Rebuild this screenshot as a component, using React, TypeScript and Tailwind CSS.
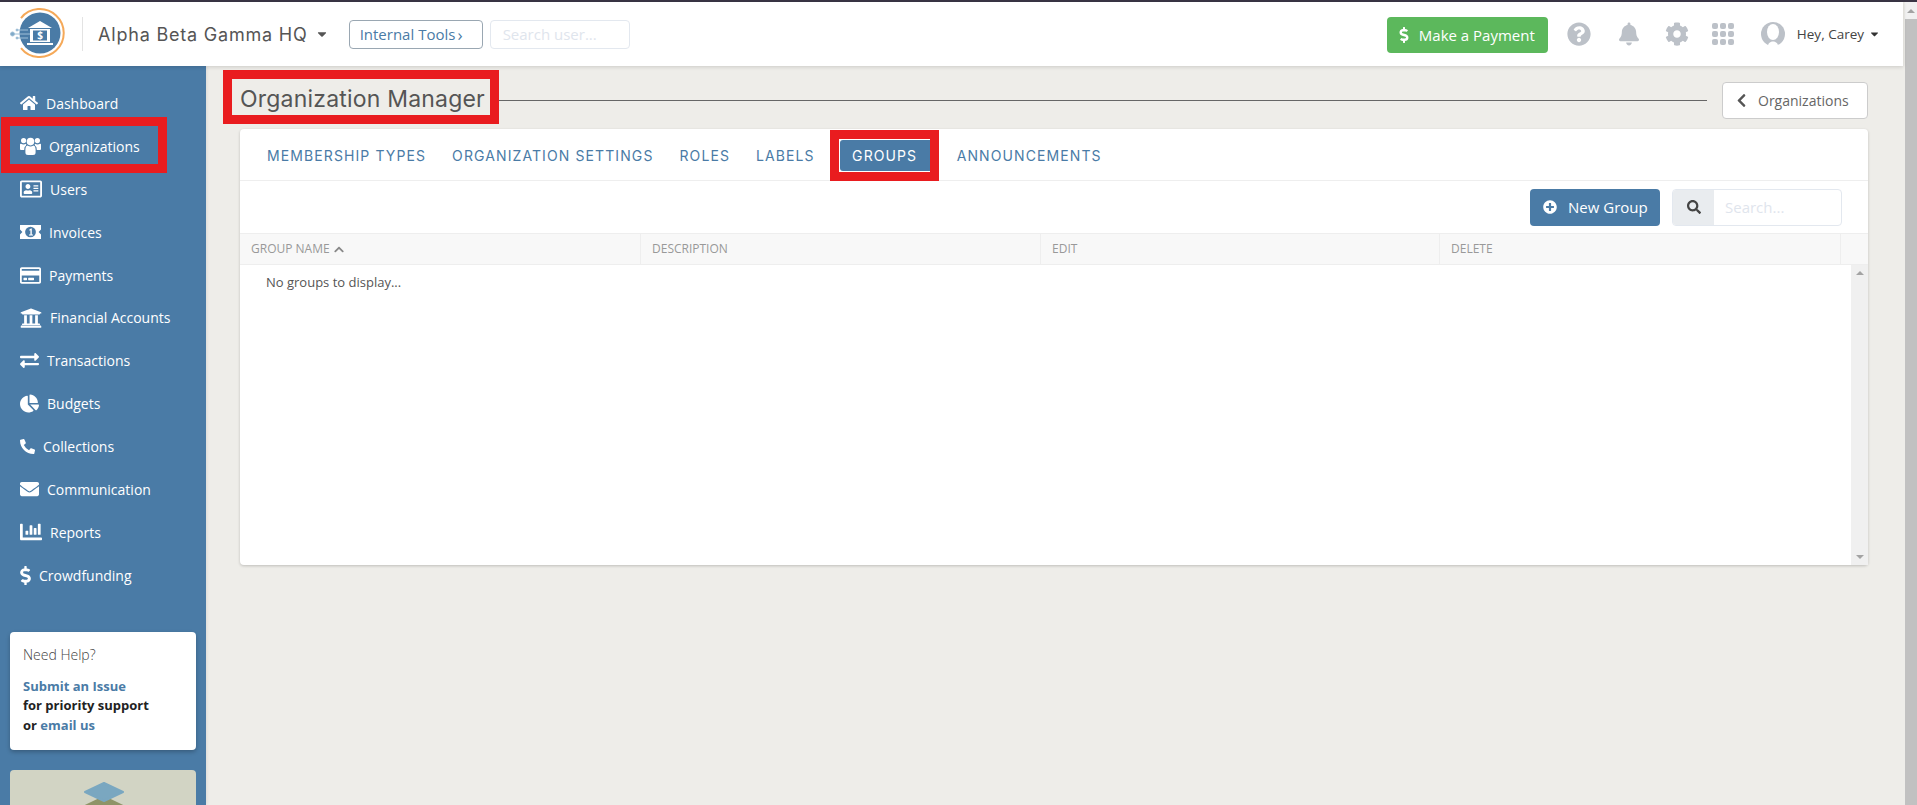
import {
  FaHome,
  FaRegAddressCard,
  FaRegCreditCard,
  FaUniversity,
  FaExchangeAlt,
  FaChartPie,
  FaPhoneAlt,
  FaEnvelope,
  FaChartBar,
  FaDollarSign,
  FaQuestionCircle,
  FaBell,
  FaCog,
  FaChevronLeft,
  FaChevronUp,
  FaPlusCircle,
  FaSearch,
  FaCaretDown,
} from 'react-icons/fa';

function UsersIcon({ className }: { className?: string }) {
  return (
    <svg viewBox="0 0 21 18" className={className} fill="currentColor">
      <circle cx="3.6" cy="3.6" r="2.6" />
      <circle cx="17.4" cy="3.6" r="2.6" />
      <path d="M0 7.5 Q0 6.6 1 6.8 Q3.6 8 6 6.8 Q6.6 7.6 6 8.4 Q4 9.6 4.2 13 H1 Q0 13 0 12 Z" />
      <path d="M21 7.5 Q21 6.6 20 6.8 Q17.4 8 15 6.8 Q14.4 7.6 15 8.4 Q17 9.6 16.8 13 H20 Q21 13 21 12 Z" />
      <circle cx="10.5" cy="4.6" r="3.8" />
      <path d="M5.4 15.5 V12 Q5.4 9 7.6 8.6 Q10.5 10.4 13.4 8.6 Q15.6 9 15.6 12 V15.5 Q15.6 18 13 18 H8 Q5.4 18 5.4 15.5 Z" />
    </svg>
  );
}

function BillIcon({ className }: { className?: string }) {
  return (
    <svg viewBox="0 0 21 14" className={className}>
      <rect width="21" height="14" fill="#fff" />
      <ellipse cx="10.5" cy="7" rx="5.4" ry="5.2" fill="#4a7ba6" />
      <path d="M9.2 4.8 L11 3.6 H11.8 V9.4 H13 V10.4 H9 V9.4 H10.4 V5.2 L9.6 5.8 Z" fill="#fff" />
      <path d="M0 4.6 L2.4 7 L0 9.4 Z M21 4.6 L18.6 7 L21 9.4 Z" fill="#4a7ba6" />
    </svg>
  );
}

const navItems = [
  { label: 'Dashboard', Icon: FaHome, size: 'w-[18px] h-[16px]' },
  { label: 'Organizations', Icon: UsersIcon, size: 'w-[21px] h-[18px]', marked: true },
  { label: 'Users', Icon: FaRegAddressCard, size: 'w-[22px] h-[20px]' },
  { label: 'Invoices', Icon: BillIcon, size: 'w-[21px] h-[14px]' },
  { label: 'Payments', Icon: FaRegCreditCard, size: 'w-[21px] h-[21px]' },
  { label: 'Financial Accounts', Icon: FaUniversity, size: 'w-[22px] h-[22px]' },
  { label: 'Transactions', Icon: FaExchangeAlt, size: 'w-[19px] h-[19px]' },
  { label: 'Budgets', Icon: FaChartPie, size: 'w-[19px] h-[19px]' },
  { label: 'Collections', Icon: FaPhoneAlt, size: 'w-[15px] h-[15px]' },
  { label: 'Communication', Icon: FaEnvelope, size: 'w-[19px] h-[20px]' },
  { label: 'Reports', Icon: FaChartBar, size: 'w-[22px] h-[22px]' },
  { label: 'Crowdfunding', Icon: FaDollarSign, size: 'w-[11px] h-[19px]' },
];

const tabs = ['Membership Types', 'Organization Settings', 'Roles', 'Labels', 'Groups', 'Announcements'];

const columns = [
  { label: 'Group Name', width: 'w-[401px]', sorted: true },
  { label: 'Description', width: 'w-[400px]' },
  { label: 'Edit', width: 'w-[399px]' },
  { label: 'Delete', width: 'w-[401px]' },
];

function Logo() {
  return (
    <svg width="58" height="60" viewBox="0 0 58 60" className="-mt-[4px] shrink-0">
      <circle cx="32" cy="31" r="20.5" fill="#4a7ba6" />
      <path d="M13 16 A24 24 0 1 1 13 46" fill="none" stroke="#f5a959" strokeWidth="2" />
      <g stroke="#9fc0d8" strokeWidth="1" fill="#7fa9c8">
        <path d="M6 32 H22 M9 28 H20 M9 36 H20" />
        <circle cx="4.5" cy="32" r="2" />
        <circle cx="9" cy="28" r="1" />
        <circle cx="9" cy="36" r="1" />
      </g>
      <path d="M32 19 L44 26 H20 Z" fill="#fff" />
      <rect x="22" y="27" width="20" height="13" fill="#fff" />
      <rect x="25" y="28.5" width="14" height="10" fill="#4a7ba6" />
      <rect x="19" y="41" width="26" height="2" fill="#fff" />
      <text x="32" y="37" textAnchor="middle" fontSize="10" fontWeight="700" fill="#fff" fontFamily="'Open Sans', sans-serif">
        $
      </text>
    </svg>
  );
}

function Header() {
  return (
    <header className="relative z-10 flex h-[64px] w-full items-center bg-white pl-[8px] pr-[24px] shadow-[0_1px_4px_rgba(0,0,0,0.15)]">
      <Logo />
      <div className="ml-[16px] h-[34px] w-px bg-[#e3e3e3]" />
      <span className="ml-[15px] font-['Inter',sans-serif] text-[18px] tracking-[0.8px] text-[#555]">Alpha Beta Gamma HQ</span>
      <FaCaretDown className="ml-[8px] h-[14px] w-[12px] text-[#555]" />
      <button className="ml-[21px] flex h-[29px] w-[134px] items-center rounded-[4px] border border-[#9aa7b2] pl-[10px] text-[15px] text-[#4a7ba6]">
        Internal Tools<span className="ml-[2px] text-[17px] leading-none">›</span>
      </button>
      <div className="ml-[7px] flex h-[29px] w-[140px] items-center rounded-[4px] border border-[#e3e8ef] pl-[12px] text-[15px] text-[#dfe5ed]">
        Search user...
      </div>
      <div className="flex-1" />
      <button className="mt-[2px] flex h-[36px] w-[161px] items-center rounded-[4px] bg-[#5cb85c] pl-[12px] text-[15px] text-white">
        <FaDollarSign className="h-[16px] w-[10px]" />
        <span className="ml-[10px]">Make a Payment</span>
      </button>
      <FaQuestionCircle className="ml-[19px] h-[24px] w-[24px] text-[#bcc1c8]" />
      <FaBell className="ml-[28px] h-[24px] w-[20px] text-[#bcc1c8]" />
      <FaCog className="ml-[26px] h-[24px] w-[24px] text-[#bcc1c8]" />
      <svg width="22" height="22" viewBox="0 0 22 22" className="ml-[23px] text-[#bcc1c8]" fill="currentColor">
        <rect x="0" y="0" width="6" height="6" rx="2" />
        <rect x="8" y="0" width="6" height="6" rx="2" />
        <rect x="16" y="0" width="6" height="6" rx="2" />
        <rect x="0" y="8" width="6" height="6" rx="2" />
        <rect x="8" y="8" width="6" height="6" rx="2" />
        <rect x="16" y="8" width="6" height="6" rx="2" />
        <rect x="0" y="16" width="6" height="6" rx="2" />
        <rect x="8" y="16" width="6" height="6" rx="2" />
        <rect x="16" y="16" width="6" height="6" rx="2" />
      </svg>
      <svg width="24" height="26" viewBox="0 0 24 26" className="ml-[27px]">
        <circle cx="12" cy="13" r="12" fill="#bcc1c8" />
        <ellipse cx="12" cy="11" rx="6" ry="8" fill="#fff" />
        <path d="M7 25 C7 19 17 19 17 25 Z" fill="#fff" />
      </svg>
      <span className="ml-[12px] text-[13.5px] text-[#444]">Hey, Carey</span>
      <FaCaretDown className="ml-[6px] h-[12px] w-[9px] text-[#333]" />
    </header>
  );
}

function Sidebar() {
  return (
    <aside className="flex w-[206px] shrink-0 flex-col overflow-hidden bg-[#4a7ba6] pt-[16px] shadow-[1px_0_3px_rgba(0,0,0,0.08)]">
      <nav>
        {navItems.map(({ label, Icon, size, marked }) => (
          <a key={label} className="relative flex h-[42.9px] items-center pl-[20px] text-[14px] text-white">
            <Icon className={size} />
            <span className="ml-[8px]">{label}</span>
            {marked && (
              <span className="absolute -top-[8px] left-[1px] h-[56px] w-[166px] border-[9px] border-[#e91c1f]" />
            )}
          </a>
        ))}
      </nav>
      <div className="mx-[10px] mt-[35px] h-[118px] shrink-0 rounded-[4px] bg-white px-[13px] pt-[12px] shadow-[0_2px_4px_rgba(0,0,0,0.25)]">
        <p className="text-[14px] font-light text-[#444]">Need Help?</p>
        <p className="mt-[12px] text-[13px] font-bold leading-[19.5px] text-[#222]">
          <span className="text-[#4a7ba6]">Submit an Issue</span>
          <br />
          for priority support
          <br />
          or <span className="text-[#4a7ba6]">email us</span>
        </p>
      </div>
      <div className="mx-[10px] mt-[20px] flex h-[60px] shrink-0 justify-center rounded-t-[4px] bg-[#d2d4c4] pt-[12px]">
        <svg width="44" height="34" viewBox="0 0 44 34" className="ml-[2px]">
          <path d="M22 15 L41 24 L22 33 L3 24 Z" fill="#8f9468" stroke="#8f9468" strokeWidth="2" strokeLinejoin="round" />
          <path d="M22 1 L41 10 L22 19 L3 10 Z" fill="#7aa7c0" stroke="#7aa7c0" strokeWidth="2" strokeLinejoin="round" />
        </svg>
      </div>
    </aside>
  );
}

function Table() {
  return (
    <div>
      <div className="flex h-[32px] border-y border-[#eee] bg-[#f8f8f8] text-[12px] uppercase text-[#999]">
        {columns.map((col) => (
          <div key={col.label} className={`${col.width} flex items-center gap-[3px] border-r border-[#eee] pl-[11px]`}>
            {col.label}
            {col.sorted && <FaChevronUp className="h-[11px] w-[12px] text-[#888]" />}
          </div>
        ))}
      </div>
      <div className="flex h-[300px]">
        <div className="flex-1 pl-[26px] pt-[8px] text-[13px] text-[#555]">No groups to display...</div>
        <div className="flex w-[17px] flex-col items-center justify-between bg-[#f0f0f0] py-[6px]">
          <span className="h-0 w-0 border-x-[4px] border-b-[4px] border-x-transparent border-b-[#a3a3a3]" />
          <span className="h-0 w-0 border-x-[4px] border-t-[4px] border-x-transparent border-t-[#a3a3a3]" />
        </div>
      </div>
    </div>
  );
}

function GroupsCard() {
  return (
    <section className="mt-[5px] w-[1628px] rounded-[4px] bg-white shadow-[0_1px_3px_rgba(0,0,0,0.2)]">
      <div className="flex h-[52px] items-center gap-[26px] border-b border-[#eee] pl-[27px] pt-[2px] font-['Inter',sans-serif] text-[14px] uppercase tracking-[1.1px] text-[#4a7ba6]">
        {tabs.map((tab) =>
          tab === 'Groups' ? (
            <div key={tab} className="-ml-[11px] -mr-[8px] h-[51px] w-[109px] border-[9px] border-[#e91c1f] bg-white py-[1px] pl-[1px]">
              <div className="flex h-full items-center justify-center rounded-l-[3px] bg-[#4a7ba6] text-white">{tab}</div>
            </div>
          ) : (
            <span key={tab}>{tab}</span>
          ),
        )}
      </div>
      <div className="flex h-[52px] items-center justify-end pr-[26px]">
        <button className="flex h-[37px] w-[130px] items-center rounded-[4px] bg-[#4a7ba6] pl-[13px] text-[15px] text-white">
          <FaPlusCircle className="h-[14px] w-[14px]" />
          <span className="ml-[11px]">New Group</span>
        </button>
        <div className="ml-[12px] flex h-[37px] w-[170px] overflow-hidden rounded-[4px] border border-[#e3e8ef]">
          <div className="flex w-[41px] items-center justify-center bg-[#e9ecef]">
            <FaSearch className="h-[14px] w-[14px] text-[#444]" />
          </div>
          <div className="flex flex-1 items-center pl-[11px] text-[15px] text-[#dfe5ed]">Search...</div>
        </div>
      </div>
      <Table />
    </section>
  );
}

export default function App() {
  return (
    <div className="flex h-[805px] w-[1917px] overflow-hidden bg-[#eeede9] font-['Open_Sans',sans-serif]">
      <div className="flex min-w-0 flex-1 flex-col">
        <div className="h-[2px] w-[1917px] shrink-0 bg-[#3a3545]" />
        <div className="w-[1903px]">
          <Header />
        </div>
        <div className="flex min-h-0 flex-1">
          <Sidebar />
          <main className="flex-1 pl-[34px]">
            <div className="flex items-center">
              <h1 className="-ml-[17px] mt-[4px] flex h-[54px] w-[276px] shrink-0 items-center border-[9px] border-[#e91c1f] pl-[8px] pt-[5px] font-['Inter',sans-serif] text-[23px] tracking-[0.2px] text-[#555]">
                Organization Manager
              </h1>
              <div className="mt-[11px] h-px w-[1208px] bg-[#666]" />
              <button className="ml-[15px] mt-[11px] flex h-[37px] w-[146px] items-center rounded-[4px] border border-[#ccc] bg-white pl-[13px] text-[14px] text-[#666]">
                <FaChevronLeft className="h-[15px] w-[11px] text-[#555]" />
                <span className="ml-[11px]">Organizations</span>
              </button>
            </div>
            <GroupsCard />
          </main>
        </div>
      </div>
      <div className="flex w-[12px] shrink-0 flex-col pt-[2px]">
        <div className="flex h-[17px] items-center justify-center bg-[#f1f1f1]">
          <span className="h-0 w-0 border-x-[4px] border-b-[4px] border-x-transparent border-b-[#a3a3a3]" />
        </div>
        <div className="flex-1 bg-[#c1c1c1]" />
      </div>
    </div>
  );
}
